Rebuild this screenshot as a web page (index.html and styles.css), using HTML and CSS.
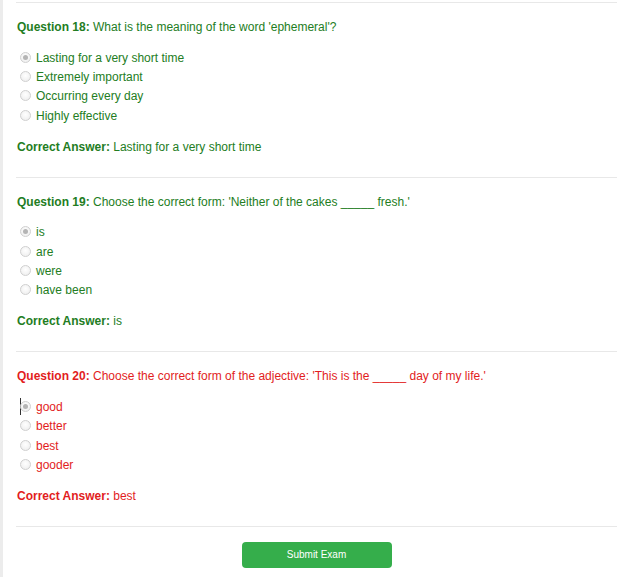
FILE: index.html
```html
<!DOCTYPE html>
<html>
<head>
<meta charset="utf-8">
<link rel="stylesheet" href="styles.css">
</head>
<body>
<div class="page">
  <div class="question ok">
    <div class="q-title"><b>Question 18:</b> What is the meaning of the word 'ephemeral'?</div>
    <div class="options">
      <label class="opt"><span class="radio checked"></span>Lasting for a very short time</label>
      <label class="opt"><span class="radio"></span>Extremely important</label>
      <label class="opt"><span class="radio"></span>Occurring every day</label>
      <label class="opt"><span class="radio"></span>Highly effective</label>
    </div>
    <div class="answer"><b>Correct Answer:</b> Lasting for a very short time</div>
  </div>
  <div class="question ok">
    <div class="q-title"><b>Question 19:</b> Choose the correct form: 'Neither of the cakes _____ fresh.'</div>
    <div class="options">
      <label class="opt"><span class="radio checked"></span>is</label>
      <label class="opt"><span class="radio"></span>are</label>
      <label class="opt"><span class="radio"></span>were</label>
      <label class="opt"><span class="radio"></span>have been</label>
    </div>
    <div class="answer"><b>Correct Answer:</b> is</div>
  </div>
  <div class="question bad last">
    <div class="q-title"><b>Question 20:</b> Choose the correct form of the adjective: 'This is the _____ day of my life.'</div>
    <div class="options">
      <label class="opt"><span class="caret"></span><span class="radio checked"></span>good</label>
      <label class="opt"><span class="radio"></span>better</label>
      <label class="opt"><span class="radio"></span>best</label>
      <label class="opt"><span class="radio"></span>gooder</label>
    </div>
    <div class="answer"><b>Correct Answer:</b> best</div>
  </div>
  <div class="actions">
    <button class="submit">Submit Exam</button>
  </div>
</div>
</body>
</html>
```
FILE: styles.css
```css
html, body {
  margin: 0;
  padding: 0;
  background: #ececec;
  height: 100%;
}
body {
  font-family: "Liberation Sans", Arial, sans-serif;
  font-size: 12px;
}
.page {
  margin-left: 3px;
  background: #fff;
  padding: 2px 8px 0 13px;
  min-height: 575px;
}
.question {
  border-top: 1px solid #e8e8e8;
  padding: 16px 0 22px 1px;
}
.question.last {
  border-bottom: 1px solid #e8e8e8;
}
.ok { color: #237d23; }
.bad { color: #e21d1d; }
.q-title {
  line-height: 16px;
}
.q-title b, .answer b {
  font-weight: bold;
}
.options {
  margin: 13px 0;
  display: flex;
  flex-direction: column;
}
.opt {
  position: relative;
  display: flex;
  align-items: center;
  height: 19.4px;
  padding-left: 3px;
}
.radio {
  box-sizing: border-box;
  width: 11px;
  height: 11px;
  border-radius: 50%;
  border: 1px solid #d0d0d0;
  background: radial-gradient(circle at 50% 40%, #ffffff 0%, #f1f1f1 70%, #e6e6e6 100%);
  margin-right: 5px;
  margin-top: -1px;
  position: relative;
}
.radio.checked::after {
  content: "";
  position: absolute;
  left: 2px;
  top: 2px;
  width: 5px;
  height: 5px;
  border-radius: 50%;
  background: #b4b4b4;
}
.caret {
  position: absolute;
  left: 3px;
  top: 1px;
  width: 1px;
  height: 17px;
  background: #333;
}
.answer {
  line-height: 16px;
}
.actions {
  display: flex;
  justify-content: center;
  padding-top: 15px;
}
.submit {
  width: 150px;
  height: 26px;
  background: #35ae4b;
  color: #fff;
  border: none;
  border-radius: 4px;
  font-family: "Liberation Sans", Arial, sans-serif;
  font-size: 10px;
}
```
